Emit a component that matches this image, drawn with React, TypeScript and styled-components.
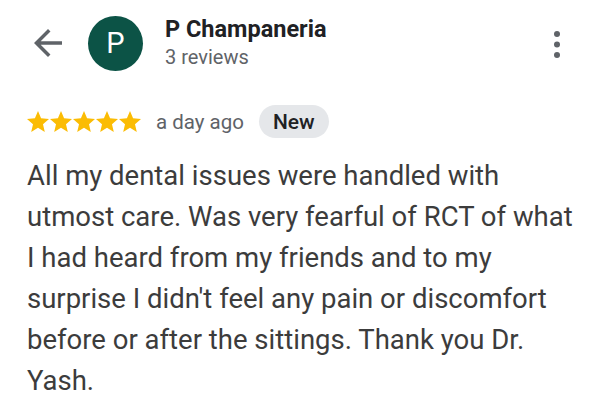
import React from "react";
import styled, { createGlobalStyle } from "styled-components";

const GlobalStyle = createGlobalStyle`
  html, body {
    margin: 0;
    padding: 0;
    background: #fff;
    font-family: Roboto, "Noto Sans", sans-serif;
  }
`;

const Page = styled.div`
  width: 599px;
  height: 408px;
  overflow: hidden;
  background: #fff;
`;

const Header = styled.div`
  display: flex;
  align-items: center;
  height: 56px;
  margin-top: 15px;
`;

const IconButton = styled.button`
  display: flex;
  align-items: center;
  justify-content: center;
  padding: 0;
  border: none;
  background: none;
  color: #5f6368;
`;

const BackButton = styled(IconButton)`
  width: 42px;
  height: 42px;
  margin-left: 27px;
`;

const MenuButton = styled(IconButton)`
  width: 24px;
  height: 40px;
  margin-left: auto;
  margin-right: 30px;
  align-self: flex-start;
  margin-top: 10px;
`;

const Avatar = styled.div`
  width: 55px;
  height: 55px;
  border-radius: 50%;
  background: #0c5346;
  color: #fff;
  display: flex;
  align-items: center;
  justify-content: center;
  font-size: 29px;
  margin-left: 19px;
`;

const Who = styled.div`
  display: flex;
  flex-direction: column;
  margin-left: 22px;
  align-self: flex-start;
`;

const Name = styled.div`
  font-size: 23.5px;
  font-weight: 700;
  color: #202124;
  line-height: 28px;
`;

const Count = styled.div`
  font-size: 20px;
  color: #5f6368;
  line-height: 28px;
`;

const RatingRow = styled.div`
  display: flex;
  align-items: center;
  margin-top: 34px;
  padding-left: 27px;
`;

const Stars = styled.div`
  display: flex;
  gap: 1px;
`;

const When = styled.span`
  font-size: 20.5px;
  color: #5f6368;
  margin-left: 15px;
`;

const Badge = styled.span`
  display: inline-flex;
  align-items: center;
  height: 33px;
  padding: 0 14px;
  margin-left: 15px;
  border-radius: 17px;
  background: #e5e7ea;
  color: #202124;
  font-size: 21px;
  font-weight: 500;
`;

const Body = styled.p`
  margin: 17px 0 0;
  padding: 0 20px 0 27px;
  font-size: 27.5px;
  line-height: 41px;
  color: #3c3c3c;
`;

const Star = () => (
  <svg width="22" height="21" viewBox="2 2 20 19">
    <path
      fill="#fbbc04"
      d="M12 17.27L18.18 21l-1.64-7.03L22 9.24l-7.19-.61L12 2 9.19 8.63 2 9.24l5.46 4.73L5.82 21z"
    />
  </svg>
);

export default function App() {
  return (
    <Page>
      <GlobalStyle />
      <Header>
        <BackButton aria-label="Back">
          <svg width="42" height="42" viewBox="0 0 24 24">
            <path
              fill="currentColor"
              d="M20 11H7.83l5.59-5.59L12 4l-8 8 8 8 1.41-1.41L7.83 13H20v-2z"
            />
          </svg>
        </BackButton>
        <Avatar>P</Avatar>
        <Who>
          <Name>P Champaneria</Name>
          <Count>3 reviews</Count>
        </Who>
        <MenuButton aria-label="More">
          <svg width="8" height="30" viewBox="0 0 8 30">
            <circle cx="4" cy="4" r="3" fill="currentColor" />
            <circle cx="4" cy="14.5" r="3" fill="currentColor" />
            <circle cx="4" cy="25" r="3" fill="currentColor" />
          </svg>
        </MenuButton>
      </Header>
      <RatingRow>
        <Stars>
          {[0, 1, 2, 3, 4].map(i => (
            <Star key={i} />
          ))}
        </Stars>
        <When>a day ago</When>
        <Badge>New</Badge>
      </RatingRow>
      <Body>
        All my dental issues were handled with utmost care. Was very fearful
        of RCT of what I had heard from my friends and to my surprise I didn't
        feel any pain or discomfort before or after the sittings. Thank you
        Dr. Yash.
      </Body>
    </Page>
  );
}
